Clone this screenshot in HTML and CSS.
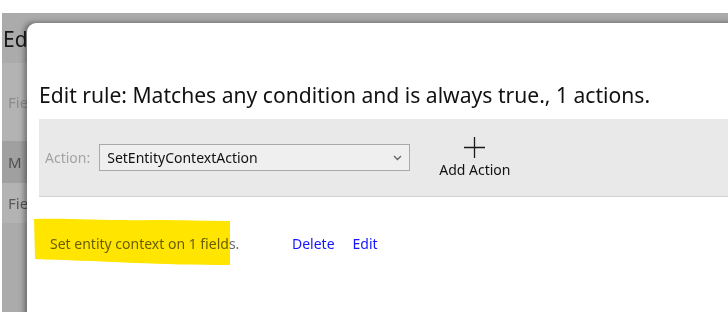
FILE: index.html
```html
<!DOCTYPE html>
<html lang="en">

<head>
  <meta charset="UTF-8">
  <title>Edit rule</title>
  <link rel="stylesheet" href="styles.css">
</head>

<body>
  <div class="backdrop">
    <div class="page">
      <div class="page-title">Ed</div>
      <div class="band band-light band-tall"><span class="muted">Fie</span></div>
      <div class="band band-dark"><span>M</span></div>
      <div class="band band-light"><span>Fie</span></div>
    </div>

    <div class="modal">
      <h2 class="modal-title">Edit rule: Matches any condition and is always true., 1 actions.</h2>

      <div class="toolbar">
        <label class="action-label">Action:</label>
        <div class="select">
          <span>SetEntityContextAction</span>
          <svg width="9" height="6" viewBox="0 0 9 6"><path d="M1 1 L4.5 4.5 L8 1" fill="none" stroke="#666" stroke-width="1.4"/></svg>
        </div>
        <a class="add-action">
          <svg width="23" height="23" viewBox="0 0 23 23"><path d="M11.5 1 V22 M1 11.5 H22" stroke="#1a1a1a" stroke-width="1.3"/></svg>
          <span>Add Action</span>
        </a>
      </div>

      <div class="action-row">
        <div class="summary">
          <span>Set entity context on 1 fields.</span>
          <svg class="marker" width="198" height="48" viewBox="0 0 198 48"><path d="M0 1 C40 0 70 3 120 2 C150 2 170 3 196 3 L196 47 C160 47 130 46 100 45 C60 43 30 42 1 41 Z" fill="#ffe500"/></svg>
        </div>
        <a class="link">Delete</a>
        <a class="link">Edit</a>
      </div>
    </div>
  </div>
</body>

</html>
```

FILE: styles.css
```css
body {
  margin: 0;
  background: #fff;
  font-family: "Noto Sans", "Open Sans", sans-serif;
  width: 728px;
  height: 312px;
  overflow: hidden;
}

.backdrop {
  position: relative;
  margin: 13px 0 0 2px;
  height: 299px;
  background: #ababab;
  overflow: hidden;
}

.page {
  white-space: nowrap;
}

.page-title {
  font-size: 21px;
  color: #161616;
  padding: 12px 0 0 1px;
  height: 38px;
}

.band {
  font-size: 15px;
  padding-left: 6px;
  display: flex;
  align-items: center;
}

.band-light {
  background: #b3b3b3;
  height: 40px;
  color: #595959;
}

.band-tall {
  height: 78px;
}

.band .muted {
  color: #8c8c8c;
}

.band-dark {
  background: #a0a0a0;
  height: 42px;
  color: #4f4f4f;
}

.modal {
  position: absolute;
  left: 25px;
  top: 10px;
  width: 720px;
  height: 320px;
  background: #fff;
  border-radius: 9px 0 0 0;
  box-shadow: -3px -1px 5px rgba(0, 0, 0, 0.35);
  padding: 0 0 0 12px;
  box-sizing: border-box;
}

.modal-title {
  margin: 0;
  padding-top: 57px;
  font-size: 21.1px;
  font-weight: normal;
  line-height: 30px;
  color: #111;
  white-space: nowrap;
}

.toolbar {
  margin-top: 9px;
  height: 77px;
  background: #e9e9e9;
  border-bottom: 1px solid #d3d3d3;
  display: flex;
  align-items: center;
  padding-left: 6px;
  font-size: 14px;
}

.action-label {
  color: #a3a3a3;
  margin-right: 9px;
}

.select {
  width: 311px;
  height: 27px;
  box-sizing: border-box;
  border: 1px solid #a9a9a9;
  background: #efefef;
  display: flex;
  align-items: center;
  justify-content: space-between;
  padding: 0 7px 0 7px;
  color: #111;
}

.add-action {
  margin-left: 29px;
  display: flex;
  flex-direction: column;
  align-items: center;
  color: #111;
  margin-top: -1px;
}

.add-action span {
  margin-top: 1px;
}

.action-row {
  display: flex;
  align-items: center;
  height: 46px;
  margin-top: 23px;
  font-size: 14px;
}

.summary {
  position: relative;
  color: #6a6a6a;
  padding-left: 11px;
  width: 242px;
}

.marker {
  position: absolute;
  left: -5px;
  top: -16px;
  mix-blend-mode: multiply;
}

.link {
  color: #1414ff;
  margin-right: 18px;
}
```
